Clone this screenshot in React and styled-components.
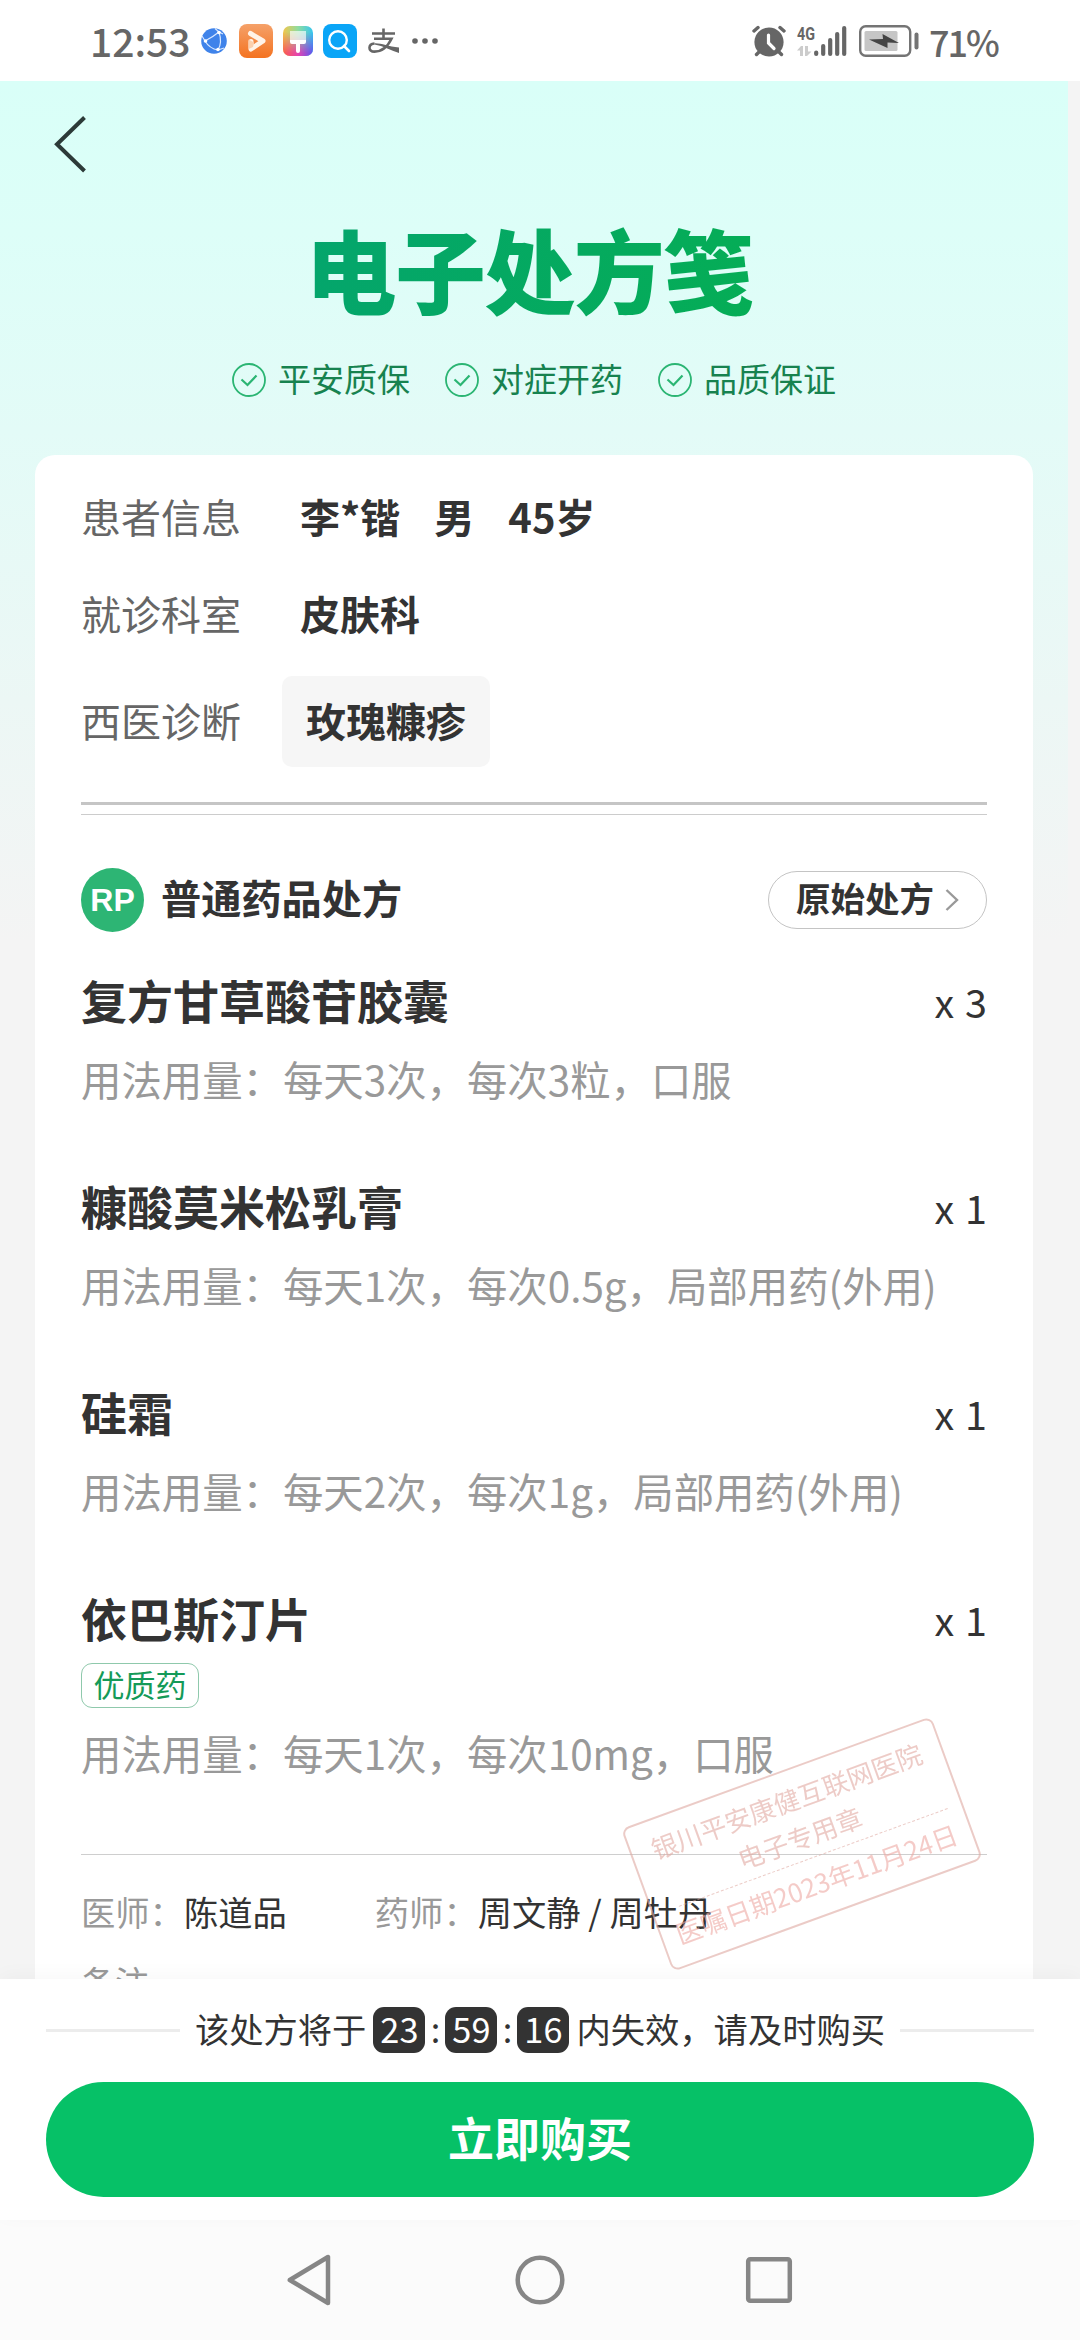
import React from 'react';
import styled, { createGlobalStyle } from 'styled-components';

const GlobalStyle = createGlobalStyle`
  * {
    box-sizing: border-box;
  }

  body {
    margin: 0;
    background: #ffffff;
    font-family: 'Noto Sans CJK SC', 'Noto Sans', sans-serif;
    color: #333333;
  }
`;

const Screen = styled.div`
  width: 1080px;
  height: 2340px;
  display: flex;
  flex-direction: column;
  overflow: hidden;
`;

/* ─── Status bar ────────────────────────────────────────────────────────── */

const StatusBar = styled.header`
  height: 81px;
  flex-shrink: 0;
  display: flex;
  justify-content: space-between;
  padding: 0 84px 0 90px;
  background: #ffffff;
  color: #666666;
`;

const StatusGroup = styled.div`
  display: flex;
  align-items: center;
  height: 81px;

  svg {
    display: block;
    flex-shrink: 0;
    overflow: visible;
  }
`;

const Clock = styled.span`
  width: 111px;
  font-size: 39px;
  font-weight: 500;
  line-height: 81px;
  white-space: nowrap;
`;

const Percent = styled.span`
  width: 67px;
  margin-left: 10px;
  font-size: 36px;
  font-weight: 500;
  line-height: 82px;
  letter-spacing: -2px;
  white-space: nowrap;
`;

/* ─── Page ──────────────────────────────────────────────────────────────── */

const Page = styled.main`
  flex: 1;
  min-height: 0;
  overflow: hidden;
  padding-right: 12px;
  background: #f4f4f4;
`;

const Sheet = styled.div`
  padding: 0 35px;
  background: linear-gradient(
    180deg,
    #d9fff8 0,
    #ddfef8 150px,
    #e3fbf7 350px,
    #ecf7f5 620px,
    #f4f4f4 860px
  );
`;

const TopBar = styled.div`
  height: 127px;
  padding: 34px 0 0 17px;
`;

const Title = styled.h1`
  margin: 0;
  padding: 14px 10px 0 0;
  height: 134px;
  font-size: 91px;
  line-height: 90px;
  font-weight: 900;
  letter-spacing: -1.6px;
  text-align: center;

  span {
    background: linear-gradient(100deg, #04a56d, #05ad55);
    -webkit-background-clip: text;
    background-clip: text;
    color: transparent;
    padding: 20px 0;
  }
`;

const Promises = styled.div`
  display: flex;
  justify-content: center;
  gap: 35px;
  height: 113px;
  padding-top: 21px;
`;

const PromiseItem = styled.div`
  display: flex;
  align-items: center;
  gap: 12px;
  height: 34px;
  font-size: 33px;
  line-height: 30px;
  color: #17824f;
  white-space: nowrap;

  span {
    padding-bottom: 4px;
  }
`;

/* ─── Card ──────────────────────────────────────────────────────────────── */

const Card = styled.section`
  position: relative;
  height: 1700px;
  padding: 32px 46px 0;
  background: #ffffff;
  border-radius: 20px;
`;

const InfoRow = styled.div`
  display: flex;
  align-items: center;
  height: ${({ $tall }) => ($tall ? 91 : 58)}px;
  margin-bottom: ${({ $gap }) => $gap}px;
`;

const InfoLabel = styled.span`
  width: ${({ $tall }) => ($tall ? 201 : 219)}px;
  font-size: 40px;
  line-height: 58px;
  padding-bottom: ${({ $tall }) => ($tall ? 4 : 0)}px;
  color: #666666;
`;

const InfoValues = styled.div`
  display: flex;
  gap: 34px;
  font-size: 40px;
  line-height: 58px;
  font-weight: 700;
`;

const Diagnosis = styled.div`
  height: 91px;
  padding: 0 24px;
  border-radius: 10px;
  background: #f6f6f6;
  font-size: 40px;
  line-height: 88px;
  font-weight: 700;
`;

const DoubleRule = styled.div`
  height: 13px;
  border-top: 3px solid #c5c5c5;
  border-bottom: 1px solid #cccccc;
`;

const SectionHead = styled.div`
  display: flex;
  align-items: center;
  height: 64px;
  margin: 53px 0 39px;
`;

const RpBadge = styled.div`
  width: 63px;
  height: 64px;
  border-radius: 50%;
  background: #2db574;
  color: #ffffff;
  font-family: 'Liberation Sans', Arial, sans-serif;
  font-size: 32px;
  line-height: 65px;
  font-weight: 700;
  text-align: center;
`;

const SectionTitle = styled.h2`
  flex: 1;
  margin: 0;
  padding: 0 0 6px 17px;
  font-size: 40.2px;
  line-height: 58px;
  font-weight: 700;
`;

const OriginalButton = styled.button`
  display: flex;
  align-items: center;
  gap: 11px;
  width: 219px;
  height: 58px;
  padding: 0 0 0 27px;
  border: 1.5px solid #c4c4c4;
  border-radius: 29px;
  background: #ffffff;
  font-family: inherit;
  font-size: 34.5px;
  font-weight: 700;
  line-height: 50px;
  color: #333333;

  span {
    padding-bottom: 6px;
  }
`;

const Drug = styled.article`
  margin-bottom: ${({ $last }) => ($last ? 72 : 69)}px;
`;

const DrugHead = styled.div`
  display: flex;
  justify-content: space-between;
  height: 60px;
  line-height: 60px;
`;

const DrugName = styled.h3`
  margin: 0;
  font-size: 46px;
  line-height: 57px;
  font-weight: 700;
`;

const DrugCount = styled.span`
  font-size: 39.5px;
  word-spacing: 2px;
`;

const QualityTag = styled.div`
  width: 118px;
  height: 45px;
  margin: 14px 0 -3px;
  border: 1.5px solid #8fc9ac;
  border-radius: 11px;
  color: #149a58;
  font-size: 31px;
  line-height: 39px;
  text-align: center;
`;

const Usage = styled.p`
  margin: 17px 0 0;
  height: 60px;
  font-size: 40.4px;
  line-height: 61px;
  color: #999999;
  white-space: nowrap;
`;

const Rule = styled.div`
  height: 1px;
  margin-bottom: 31px;
  background: #cecece;
`;

const Signatures = styled.div`
  display: flex;
  height: 50px;
  margin-bottom: 21px;
  font-size: 34.3px;
  line-height: 51px;
  white-space: pre;
`;

const Signature = styled.div`
  margin-right: 88px;

  em {
    font-style: normal;
    color: #999999;
  }
`;

const Remark = styled.div`
  font-size: 34px;
  line-height: 50px;
  color: #999999;
`;

/* Hospital seal lying over the end of the prescription */
const Stamp = styled.div`
  position: absolute;
  left: 602px;
  top: 1313px;
  width: 330px;
  height: 152px;
  padding-top: 8px;
  border: 2px solid #dfaaa2;
  border-radius: 8px;
  color: #e2aaa2;
  opacity: 0.6;
  transform: rotate(-20deg);
  font-size: 26px;
  line-height: 39px;
  text-align: center;
  white-space: nowrap;
`;

const StampDate = styled.div`
  margin: 4px 14px 0 26px;
  padding-top: 5px;
  border-top: 1.5px dashed #dfaaa2;

  span {
    display: block;
    margin: 0 -16px 0 -28px;
    color: #eeaaa4;
  }
`;

/* ─── Purchase footer ───────────────────────────────────────────────────── */

const Footer = styled.footer`
  position: relative;
  flex-shrink: 0;
  height: 241px;
  padding: 28px 46px 0;
  background: #ffffff;
  box-shadow: 0 -4px 18px rgba(0, 0, 0, 0.03);
`;

const Countdown = styled.div`
  display: flex;
  align-items: center;
  height: 46px;
  margin-bottom: 29px;
  font-size: 34.3px;
  line-height: 42px;
  white-space: nowrap;

  &::before,
  &::after {
    content: '';
    flex: 1;
    height: 3px;
    background: #ececec;
  }
`;

const CountText = styled.span`
  padding: 0 ${({ $end }) => ($end ? 15 : 7)}px 4px ${({ $end }) => ($end ? 7 : 15)}px;
`;

const TimeBox = styled.span`
  width: 52px;
  height: 46px;
  border-radius: 11px;
  background: #333333;
  color: #ffffff;
  line-height: 43px;
  text-align: center;
`;

const Colon = styled.span`
  width: 20px;
  padding-bottom: 4px;
  text-align: center;
`;

const BuyButton = styled.button`
  display: block;
  width: 100%;
  height: 115px;
  padding: 0 0 8px;
  border: none;
  border-radius: 58px;
  background: #06c167;
  color: #ffffff;
  font-family: inherit;
  font-size: 46px;
  font-weight: 700;
`;

const NavBar = styled.nav`
  display: flex;
  align-items: center;
  justify-content: center;
  gap: 180px;
  flex-shrink: 0;
  height: 120px;
  background: #fbfbfb;
`;

/* ─── Icons ─────────────────────────────────────────────────────────────── */

const GlobeIcon = () => (
  <svg width="26" height="26" viewBox="0 0 26 26" fill="none">
    <circle cx="13" cy="13" r="12.8" fill="#3f83ea" />
    <path
      d="M4 13C8 11 13 8 18 4M4 13C7 18 11 21 17 22M18 4C20 10 20 17 17 22M4 13L1 8M18 4L14 0.5M18 4L22 6M17 22L23 20"
      stroke="#d8e8ff"
      strokeWidth="1.2"
    />
    <circle cx="4.5" cy="13" r="1.8" fill="#ffffff" />
    <circle cx="18" cy="4.5" r="1.8" fill="#ffffff" />
    <circle cx="17" cy="21.5" r="1.8" fill="#ffffff" />
  </svg>
);

const VideoIcon = () => (
  <svg width="34" height="34" viewBox="0 0 34 34" fill="none" style={{ marginLeft: 12 }}>
    <defs>
      <linearGradient id="video" x1="0" y1="0" x2="0" y2="1">
        <stop offset="0" stopColor="#f5a169" />
        <stop offset="1" stopColor="#f47321" />
      </linearGradient>
    </defs>
    <rect width="34" height="34" rx="8" fill="url(#video)" />
    <path d="M11.5 9.5L24 17L12 25V17.5" stroke="#fff3e8" strokeWidth="5" strokeLinejoin="round" strokeLinecap="round" />
    <path d="M9.6 15.5L15 18.5L14 23L9.6 25Z" fill="#fbd0ae" />
  </svg>
);

const ThemeIcon = () => (
  <svg width="30" height="30" viewBox="0 0 30 30" style={{ marginLeft: 10 }}>
    <defs>
      <linearGradient id="themeTop" x1="0" y1="0" x2="1" y2="0">
        <stop offset="0" stopColor="#f2c64b" />
        <stop offset="0.5" stopColor="#8fdca0" />
        <stop offset="1" stopColor="#35c6f0" />
      </linearGradient>
      <linearGradient id="themeBottom" x1="0" y1="0" x2="1" y2="0">
        <stop offset="0" stopColor="#fb5c4c" />
        <stop offset="0.5" stopColor="#e544b0" />
        <stop offset="1" stopColor="#5a56f0" />
      </linearGradient>
      <linearGradient id="themeFade" x1="0" y1="0" x2="0" y2="1">
        <stop offset="0.2" stopColor="#000000" />
        <stop offset="0.9" stopColor="#ffffff" />
      </linearGradient>
      <mask id="themeMask">
        <rect width="30" height="30" fill="url(#themeFade)" />
      </mask>
    </defs>
    <rect width="30" height="30" rx="7" fill="url(#themeTop)" />
    <rect width="30" height="30" rx="7" fill="url(#themeBottom)" mask="url(#themeMask)" />
    <rect x="7" y="5" width="16" height="9" fill="#ffffff" opacity="0.65" />
    <path d="M7 14H23V16Q23 18 21 18H17V25Q17 27 15 27Q13 27 13 25V18H9Q7 18 7 16Z" fill="#ffffff" />
  </svg>
);

const SearchIcon = () => (
  <svg width="34" height="34" viewBox="0 0 34 34" fill="none" style={{ marginLeft: 10 }}>
    <rect width="34" height="34" rx="8" fill="#0aa5f7" />
    <circle cx="15" cy="16" r="8.8" stroke="#ffffff" strokeWidth="2.4" />
    <path d="M21 22L26 27" stroke="#ffffff" strokeWidth="2.6" strokeLinecap="round" />
  </svg>
);

const PayIcon = () => (
  <svg
    width="31"
    height="26"
    viewBox="0 0 31 26"
    fill="none"
    stroke="#666666"
    strokeWidth="2.6"
    style={{ marginLeft: 11 }}
  >
    <path d="M4 5.5H27M15.5 0.5V11M6 10.8H23.5C20 18 14 23.6 6.5 23.6C-0.4 23.6 0 16 6.5 15.5" />
    <path d="M6.5 15.2C13 14.8 20 18.5 31 19.5V25C24 23 15 18 6.5 16.6Z" fill="#666666" stroke="none" />
  </svg>
);

const DotsIcon = () => (
  <svg width="26" height="6" viewBox="0 0 26 6" fill="#666666" style={{ marginLeft: 13 }}>
    <circle cx="3" cy="3" r="2.8" />
    <circle cx="13" cy="3" r="2.8" />
    <circle cx="23" cy="3" r="2.8" />
  </svg>
);

const AlarmIcon = () => (
  <svg width="34" height="32" viewBox="0 0 34 32" fill="none" stroke="#666666" strokeLinecap="round">
    <circle cx="17" cy="17" r="14.6" fill="#666666" stroke="none" />
    <path d="M2 6L6 2.5M32 6L28 2.5" strokeWidth="3.4" />
    <path d="M7 27L4.5 29.5M27 27L29.5 29.5" strokeWidth="3.4" />
    <path d="M16.5 10V18L22 23.5" stroke="#ffffff" strokeWidth="3.2" />
  </svg>
);

const SignalIcon = () => (
  <svg width="50" height="32" viewBox="0 0 50 32" style={{ marginLeft: 11 }}>
    <text
      x="0"
      y="15"
      fontFamily="Roboto, sans-serif"
      fontWeight="700"
      fontSize="18.5"
      textLength="18"
      lengthAdjust="spacingAndGlyphs"
      fill="#666666"
    >
      4G
    </text>
    <path d="M6 31V21H4L0 25.5H3V31ZM8 21V31H10L14.5 26.5H11V21Z" fill="#cccccc" />
    <g stroke="#666666" strokeWidth="4.2" strokeLinecap="round">
      <path d="M19.2 27.5V29M26.2 21V29M33.2 15V29M40.2 9V29M47.2 3V29" />
    </g>
  </svg>
);

const BatteryIcon = () => (
  <svg width="60" height="32" viewBox="0 0 60 32" style={{ marginLeft: 12 }}>
    <rect x="1.2" y="1.2" width="50" height="29.6" rx="5.5" fill="none" stroke="#747474" strokeWidth="2.4" />
    <rect x="5.5" y="6" width="33" height="20" rx="1.5" fill="#c6c6c6" />
    <path d="M10 14.5L24 14L23.5 9L40 18L28.5 17.5L28.5 23Z" fill="#444444" />
    <rect x="55.5" y="7.5" width="4" height="17" rx="2" fill="#747474" />
  </svg>
);

const BackIcon = () => (
  <svg width="36" height="60" viewBox="0 0 36 60" fill="none">
    <path d="M32.5 2.5L5 29.3L32.5 56" stroke="#2c3a38" strokeWidth="4" />
  </svg>
);

const CheckIcon = () => (
  <svg width="34" height="34" viewBox="0 0 34 34" fill="none" stroke="#2bb573" strokeWidth="1.8">
    <circle cx="17" cy="17" r="16" />
    <path d="M9.5 16.5L15.5 22L24.5 12.5" strokeWidth="2.2" />
  </svg>
);

const ArrowIcon = () => (
  <svg width="14" height="24" viewBox="0 0 14 24" fill="none">
    <path d="M1.5 2L12 12L1.5 22" stroke="#999999" strokeWidth="2.4" />
  </svg>
);

/* ─── Data ──────────────────────────────────────────────────────────────── */

const PROMISES = ['平安质保', '对症开药', '品质保证'];

const DRUGS = [
  { name: '复方甘草酸苷胶囊', count: 3, usage: '每天3次，每次3粒，口服' },
  { name: '糠酸莫米松乳膏', count: 1, usage: '每天1次，每次0.5g，局部用药(外用)' },
  { name: '硅霜', count: 1, usage: '每天2次，每次1g，局部用药(外用)' },
  { name: '依巴斯汀片', count: 1, usage: '每天1次，每次10mg，口服', tag: '优质药' },
];

const App = () => (
  <>
    <GlobalStyle />
    <Screen>
      <StatusBar>
        <StatusGroup>
          <Clock>12:53</Clock>
          <GlobeIcon />
          <VideoIcon />
          <ThemeIcon />
          <SearchIcon />
          <PayIcon />
          <DotsIcon />
        </StatusGroup>
        <StatusGroup>
          <AlarmIcon />
          <SignalIcon />
          <BatteryIcon />
          <Percent>71%</Percent>
        </StatusGroup>
      </StatusBar>

      <Page>
        <Sheet>
          <TopBar>
            <BackIcon />
          </TopBar>
          <Title>
            <span>电子处方笺</span>
          </Title>
          <Promises>
            {PROMISES.map((text) => (
              <PromiseItem key={text}>
                <CheckIcon />
                <span>{text}</span>
              </PromiseItem>
            ))}
          </Promises>

          <Card>
            <InfoRow $gap={39}>
              <InfoLabel>患者信息</InfoLabel>
              <InfoValues>
                <span>李*锴</span>
                <span>男</span>
                <span>45岁</span>
              </InfoValues>
            </InfoRow>
            <InfoRow $gap={34}>
              <InfoLabel>就诊科室</InfoLabel>
              <InfoValues>皮肤科</InfoValues>
            </InfoRow>
            <InfoRow $tall $gap={35}>
              <InfoLabel $tall>西医诊断</InfoLabel>
              <Diagnosis>玫瑰糠疹</Diagnosis>
            </InfoRow>
            <DoubleRule />

            <SectionHead>
              <RpBadge>RP</RpBadge>
              <SectionTitle>普通药品处方</SectionTitle>
              <OriginalButton>
                <span>原始处方</span>
                <ArrowIcon />
              </OriginalButton>
            </SectionHead>

            {DRUGS.map((drug, i) => (
              <Drug key={drug.name} $last={i === DRUGS.length - 1}>
                <DrugHead>
                  <DrugName>{drug.name}</DrugName>
                  <DrugCount>x {drug.count}</DrugCount>
                </DrugHead>
                {drug.tag && <QualityTag>{drug.tag}</QualityTag>}
                <Usage>用法用量：{drug.usage}</Usage>
              </Drug>
            ))}

            <Rule />
            <Signatures>
              <Signature>
                <em>医师：</em>陈道品
              </Signature>
              <Signature>
                <em>药师：</em>周文静 / 周牡丹
              </Signature>
            </Signatures>
            <Remark>备注</Remark>

            <Stamp>
              <div>银川平安康健互联网医院</div>
              <div>电子专用章</div>
              <StampDate>
                <span>医嘱日期2023年11月24日</span>
              </StampDate>
            </Stamp>
          </Card>
        </Sheet>
      </Page>

      <Footer>
        <Countdown>
          <CountText>该处方将于</CountText>
          <TimeBox>23</TimeBox>
          <Colon>:</Colon>
          <TimeBox>59</TimeBox>
          <Colon>:</Colon>
          <TimeBox>16</TimeBox>
          <CountText $end>内失效，请及时购买</CountText>
        </Countdown>
        <BuyButton>立即购买</BuyButton>
      </Footer>

      <NavBar>
        <svg width="48" height="56" viewBox="0 0 48 56" fill="none" stroke="#868686" strokeWidth="4.5" strokeLinejoin="round">
          <path d="M41 5V51L2.8 28Z" />
        </svg>
        <svg width="50" height="50" viewBox="0 0 50 50" fill="none" stroke="#868686" strokeWidth="4.5">
          <circle cx="25" cy="25" r="22.3" />
        </svg>
        <svg width="48" height="48" viewBox="0 0 48 48" fill="none" stroke="#868686" strokeWidth="4.5">
          <rect x="3.2" y="3.2" width="41.6" height="41.6" rx="2" />
        </svg>
      </NavBar>
    </Screen>
  </>
);

export default App;
